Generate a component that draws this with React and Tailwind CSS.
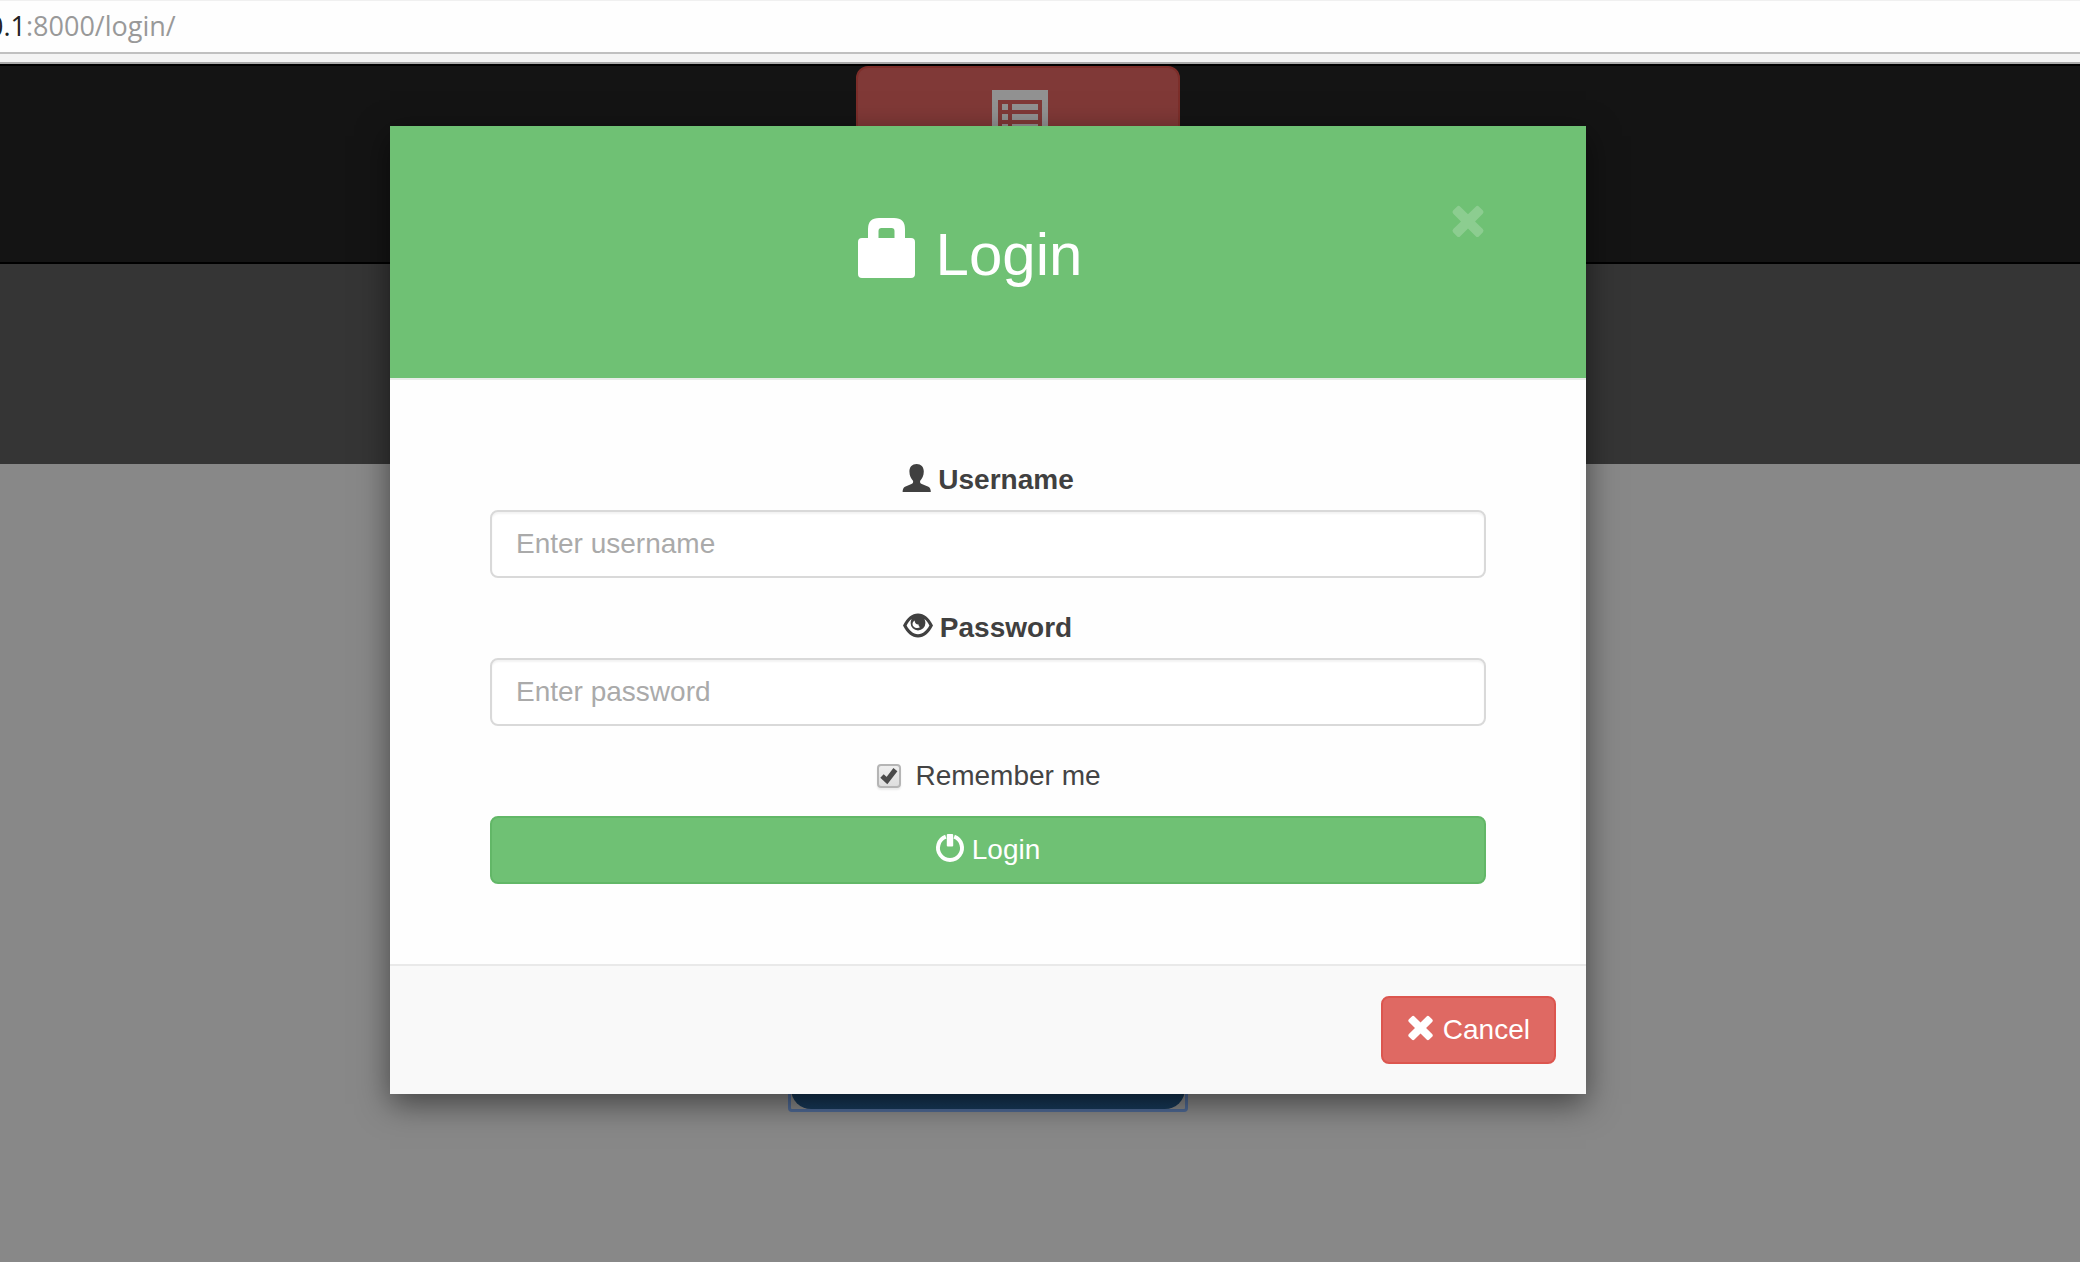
function Icon({ className = "mb-1 size-7", box = "0 0 28 28", children }) {
  return (
    <svg aria-hidden="true" viewBox={box} className={`${className} shrink-0 overflow-visible`} fill="currentColor">
      {children}
    </svg>
  );
}

const cross = (
  <path
    transform="rotate(45 12.5 14)"
    d="M-.9 9.8 H8.3 V.6 Q8.3 -1.4 10.3 -1.4 H14.7 Q16.7 -1.4 16.7 .6 V9.8 H25.9 Q27.9 9.8 27.9 11.8 V16.2 Q27.9 18.2 25.9 18.2 H16.7 V27.4 Q16.7 29.4 14.7 29.4 H10.3 Q8.3 29.4 8.3 27.4 V18.2 H-.9 Q-2.9 18.2 -2.9 16.2 V11.8 Q-2.9 9.8 -.9 9.8 Z"
  />
);

const fieldClass =
  "block h-[68px] w-full rounded-lg border-2 border-[#d9d9d9] bg-white px-6 text-[28px] text-[#444] shadow-[inset_0_2px_2px_rgba(0,0,0,0.05)] outline-none placeholder:text-[#aaa]";
const labelClass = "mb-2.5 flex items-center justify-center gap-2 font-bold leading-10 text-[#404040]";

function LoginDialog() {
  return (
    <form
      role="dialog"
      aria-labelledby="login-title"
      onSubmit={(e) => e.preventDefault()}
      className="w-full max-w-[1196px] bg-[#fefefe] text-[28px] shadow-[0_10px_30px_rgba(0,0,0,0.5)]"
    >
      <header className="flex items-start border-b-2 border-[#e8ece8] bg-[#6fc174] px-[100px] py-20 text-white">
        <h1 id="login-title" className="mb-2.5 mt-4 flex h-[66px] flex-1 items-end justify-center gap-[18px] text-[60px] leading-[66px]">
          <svg aria-hidden="true" viewBox="0 0 60 60" className="mb-2.5 size-15 shrink-0" fill="currentColor">
            <path d="M10 20 V11 Q10 0 21 0 H36 Q47 0 47 11 V20 H53 Q57 20 57 24 V56 Q57 60 53 60 H4 Q0 60 0 56 V24 Q0 20 4 20 Z M20.5 20 H36.5 V13 Q36.5 10 33.5 10 H23.5 Q20.5 10 20.5 13 Z" fillRule="evenodd" />
          </svg>
          Login
        </h1>
        <button type="button" aria-label="Close" className="flex w-9 justify-center text-white opacity-20">
          <Icon className="size-8" box="-1 1 27 27">{cross}</Icon>
        </button>
      </header>

      <div className="px-[100px] py-20">
        <div className="mb-[30px]">
          <label htmlFor="username" className={labelClass}>
            <Icon>
              <path d="M14.6 0 C19 0 21.8 2.8 21.8 7.6 C21.8 11.8 20 15 18.2 16.8 C17.8 18.4 18.2 19.4 19.8 20 L26.4 22.8 Q28.8 24 28.8 28 H.6 Q.6 24 3 22.8 L9.4 20 C11 19.4 11.4 18.4 11 16.8 C9.2 15 7.4 11.8 7.4 7.6 C7.4 2.8 10.2 0 14.6 0 Z" />
            </Icon>
            Username
          </label>
          <input id="username" type="text" placeholder="Enter username" className={fieldClass} />
        </div>
        <div className="mb-[30px]">
          <label htmlFor="password" className={labelClass}>
            <Icon>
              <path
                fillRule="evenodd"
                d="M-1 13.5 C3 5.5 8 1.5 14 1.5 S25 5.5 29 13.5 C25 21.5 20 25.5 14 25.5 S3 21.5 -1 13.5 Z M2.6 13.5 C5 18.2 9 22.2 14 22.2 S23 18.2 25.4 13.5 C24 10.5 22.4 8.5 20.4 7 Q21.4 9 21.4 11 A7.4 7.4 0 0 1 6.6 11 Q6.6 9 7.6 7 C5.6 8.5 4 10.5 2.6 13.5 Z M10.6 8.4 C8 10 8.2 13 9.6 14.4 C11.2 16.2 14.4 16.6 16.2 15 C15 14.6 14.4 13.6 14.6 12.4 C12.4 12.6 10.8 11 10.6 8.4 Z"
              />
            </Icon>
            Password
          </label>
          <input id="password" type="password" placeholder="Enter password" className={fieldClass} />
        </div>
        <label className="mb-5 flex items-center justify-center gap-3.5 pl-0.5 leading-10 text-[#444]">
          <span className="grid size-6">
            <input
              type="checkbox"
              defaultChecked
              className="peer col-start-1 row-start-1 size-6 appearance-none rounded border-2 border-[#b5b5b5] bg-linear-to-b from-[#eeeeee] to-[#dedede] shadow-[0_2px_2px_rgba(0,0,0,0.08)]"
            />
            <svg aria-hidden="true" viewBox="0 0 24 24" className="pointer-events-none invisible col-start-1 row-start-1 size-6 peer-checked:visible" fill="none" stroke="#4a4a4a" strokeWidth="5">
              <path d="M5 12 L10 16.5 L18.4 5.6" />
            </svg>
          </span>
          Remember me
        </label>
        <button type="submit" className="flex h-[68px] w-full items-center justify-center gap-2 rounded-lg border-2 border-[#62b767] bg-[#6fc174] text-white">
          <Icon>
            <path d="M9.8 2.7 A12 12 0 1 0 18.2 2.7" fill="none" stroke="currentColor" strokeWidth="4" />
            <rect x="10.8" y="0" width="6.4" height="12.5" rx="1" />
          </Icon>
          Login
        </button>
      </div>

      <footer className="flex justify-end border-t-2 border-[#e9e9e9] bg-[#f9f9f9] p-[30px]">
        <button type="button" className="flex h-[68px] items-center gap-2 rounded-lg border-2 border-[#dc564f] bg-[#df6963] px-6 text-white">
          <Icon box="-2 -1 30 30">{cross}</Icon>
          Cancel
        </button>
      </footer>
    </form>
  );
}

export default function App() {
  return (
    <div className="flex min-h-screen flex-col overflow-hidden bg-white font-['Liberation_Sans',Arial,sans-serif]">
      <div className="h-[54px] overflow-hidden border-b-2 border-t border-b-[#c0c0c0] border-t-[#f0f0f0] bg-[#fefefe]">
        <p className="-ml-3 whitespace-nowrap font-['Open_Sans',sans-serif] text-[27px] leading-[50px] text-[#999]">
          <span className="text-[#222]">0.1</span>:8000/login/
        </p>
      </div>
      <div className="h-2.5 border-b-2 border-[#aaa] bg-[#f4f4f4]" />

      <div className="relative flex flex-1 flex-col bg-[#888]">
        <nav className="flex h-[200px] justify-center border-y-2 border-black bg-[#141414] pr-11">
          <button type="button" aria-label="List" className="flex h-28 w-[324px] justify-center rounded-xl border-2 border-[#7c2e2a] bg-[#803937] pl-1 pt-[22px]">
            <svg aria-hidden="true" viewBox="0 0 56 56" className="size-14" fill="#929292">
              <path fillRule="evenodd" d="M0 0 H56 V56 H0 Z M6 10 V50 H50 V10 Z" />
              <path d="M10 14 h6 v6 h-6 Z M20 14 h26 v6 h-26 Z M10 24 h6 v6 h-6 Z M20 24 h26 v6 h-26 Z M10 34 h6 v6 h-6 Z M20 34 h26 v6 h-26 Z" />
            </svg>
          </button>
        </nav>
        <div className="h-[200px] bg-[#353535]" />
        <main className="flex flex-1 items-end justify-center pb-[150px] pr-[104px]">
          <button type="button" aria-label="Open login" className="w-[400px] rounded border-[3px] border-[#4f6a96]">
            <span className="block h-24 rounded-[20px] bg-linear-to-b from-[#10222e] to-[#17395a]" />
          </button>
        </main>

        <div className="absolute inset-0 flex items-start justify-center pr-[104px] pt-[62px]">
          <LoginDialog />
        </div>
      </div>
    </div>
  );
}
